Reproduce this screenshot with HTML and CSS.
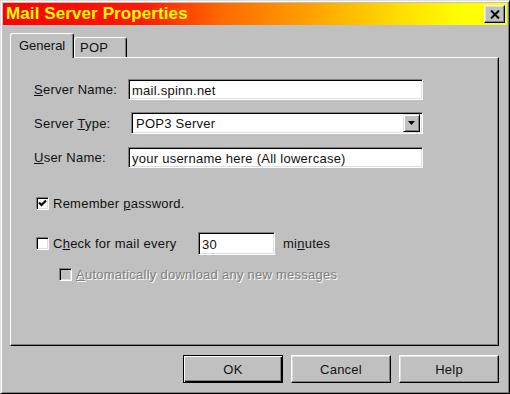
FILE: index.html
```html
<!DOCTYPE html>
<html lang="en">
<head>
  <meta charset="UTF-8" />
  <title>Mail Server Properties</title>
  <link rel="stylesheet" href="styles.css">
</head>
<body>
  <div class="window">
    <div class="titlebar">
      <span class="title">Mail Server Properties</span>
      <button class="close-btn">
        <svg width="10" height="9" viewBox="0 0 10 9">
          <path d="M1 0.5 L9 8.5 M9 0.5 L1 8.5" stroke="#000" stroke-width="2"/>
        </svg>
      </button>
    </div>

    <div class="dialog">
      <div class="tabs">
        <div class="tab active">General</div>
        <div class="tab">POP</div>
      </div>

      <div class="panel">
        <div class="field-row">
          <label class="field-label"><u>S</u>erver Name:</label>
          <div class="field">mail.spinn.net</div>
        </div>
        <div class="field-row">
          <label class="field-label">Server <u>T</u>ype:</label>
          <div class="field select">
            <span>POP3 Server</span>
            <span class="drop-btn">
              <svg width="7" height="4" viewBox="0 0 7 4"><path d="M0 0 H7 L3.5 4 Z" fill="#000"/></svg>
            </span>
          </div>
        </div>
        <div class="field-row">
          <label class="field-label"><u>U</u>ser Name:</label>
          <div class="field">your username here (All lowercase)</div>
        </div>

        <div class="check-row first">
          <span class="checkbox">
            <svg width="9" height="9" viewBox="0 0 9 9"><path d="M1 3.5 L3.5 6 L8 1.5" stroke="#000" stroke-width="2.2" fill="none"/></svg>
          </span>
          <span>Remember <u>p</u>assword.</span>
        </div>

        <div class="check-row every">
          <span class="checkbox"></span>
          <span class="check-label">C<u>h</u>eck for mail every</span>
          <div class="field small">30</div>
          <span class="unit">mi<u>n</u>utes</span>
        </div>

        <div class="check-row sub disabled">
          <span class="checkbox off"></span>
          <span><u>A</u>utomatically download any new messages</span>
        </div>
      </div>

      <div class="buttons">
        <button class="btn default">OK</button>
        <button class="btn">Cancel</button>
        <button class="btn">Help</button>
      </div>
    </div>
  </div>
</body>
</html>
```

FILE: styles.css
```css
* {
  margin: 0;
  padding: 0;
  box-sizing: border-box;
}

body {
  background-color: #c0c0c0;
  font-family: "Liberation Sans", Arial, sans-serif;
  font-size: 13px;
  letter-spacing: 0.25px;
  color: #111;
}

.window {
  width: 510px;
  height: 394px;
  background-color: #c0c0c0;
  border: 1px solid;
  border-color: #dfdfdf #000 #000 #dfdfdf;
  box-shadow: inset 1px 1px #fff, inset -1px -1px #808080;
  padding: 2px;
  display: flex;
  flex-direction: column;
}

.titlebar {
  height: 22px;
  display: flex;
  align-items: center;
  justify-content: space-between;
  padding: 0 2px 0 3px;
  background: linear-gradient(to right, #ff0000 0px, #ff1a00 140px, #ff6a00 220px, #ffaa00 320px, #ffe000 400px, #ffff00 460px);
}

.title {
  color: #ffff00;
  font-weight: bold;
  font-size: 17px;
  letter-spacing: 0.1px;
}

.close-btn {
  width: 21px;
  height: 18px;
  background-color: #c0c0c0;
  border: 1px solid;
  border-color: #fff #000 #000 #fff;
  box-shadow: inset -1px -1px #808080, inset 1px 1px #dfdfdf;
  display: flex;
  align-items: center;
  justify-content: center;
}

.dialog {
  padding: 8px 8px 0 7px;
}

.tabs {
  display: flex;
  align-items: flex-end;
  height: 24px;
}

.tab {
  height: 20px;
  padding: 2px 0 0 5px;
  border: 1px solid;
  border-bottom: none;
  border-color: #fff #000 #000 #fff;
  border-radius: 3px 3px 0 0;
  box-shadow: inset -1px 0 #808080;
  width: 53px;
}

.tab.active {
  position: relative;
  z-index: 1;
  height: 25px;
  margin-bottom: -1px;
  width: 64px;
  padding: 4px 0 0 8px;
  background-color: #c0c0c0;
  letter-spacing: 0;
}

.panel {
  height: 289px;
  border: 1px solid;
  border-color: #fff #000 #000 #fff;
  box-shadow: inset -1px -1px #808080;
  padding: 20px 0 0 23px;
}

.field-row {
  display: flex;
  align-items: center;
  height: 22px;
  margin-bottom: 12px;
}

.field-label {
  width: 94px;
}

.field {
  width: 295px;
  height: 21px;
  background-color: #fff;
  border: 1px solid;
  border-color: #808080 #fff #fff #808080;
  box-shadow: inset 1px 1px #000, inset -1px -1px #dfdfdf;
  padding: 3px 0 0 3px;
  white-space: nowrap;
}

.field.select {
  width: 292px;
  height: 22px;
  margin-left: 3px;
  display: flex;
  justify-content: space-between;
  padding: 2px 2px 2px 4px;
  align-items: center;
}

.drop-btn {
  width: 17px;
  height: 18px;
  background-color: #c0c0c0;
  border: 1px solid;
  border-color: #dfdfdf #000 #000 #dfdfdf;
  box-shadow: inset 1px 1px #fff, inset -1px -1px #808080;
  display: flex;
  align-items: center;
  justify-content: center;
}

.check-row {
  display: flex;
  align-items: center;
  height: 16px;
  padding-left: 2px;
}

.check-row.first {
  margin-top: 27px;
}

.check-row.every {
  height: 23px;
  margin-top: 21px;
}

.check-row.sub {
  margin-top: 11px;
  padding-left: 25px;
}

.checkbox {
  width: 13px;
  height: 13px;
  margin-right: 4px;
  background-color: #fff;
  border: 1px solid;
  border-color: #808080 #fff #fff #808080;
  box-shadow: inset 1px 1px #000, inset -1px -1px #dfdfdf;
  display: flex;
  align-items: center;
  justify-content: center;
}

.checkbox.off {
  background-color: #c0c0c0;
}

.check-label {
  width: 145px;
}

.field.small {
  width: 77px;
  height: 23px;
  padding-top: 4px;
}

.unit {
  margin-left: 8px;
}

.disabled {
  color: #808080;
  text-shadow: 1px 1px #fff;
}

.buttons {
  display: flex;
  justify-content: flex-end;
  gap: 8px;
  margin-top: 9px;
}

.btn {
  width: 100px;
  height: 28px;
  font-family: "Liberation Sans", Arial, sans-serif;
  font-size: 13px;
  letter-spacing: 0.25px;
  color: #111;
  background-color: #c0c0c0;
  border: 1px solid;
  border-color: #fff #000 #000 #fff;
  box-shadow: inset -1px -1px #808080, inset 1px 1px #dfdfdf;
}

.btn.default {
  border-color: #000;
  box-shadow: inset 1px 1px #fff, inset -1px -1px #000, inset -2px -2px #808080;
}
```
